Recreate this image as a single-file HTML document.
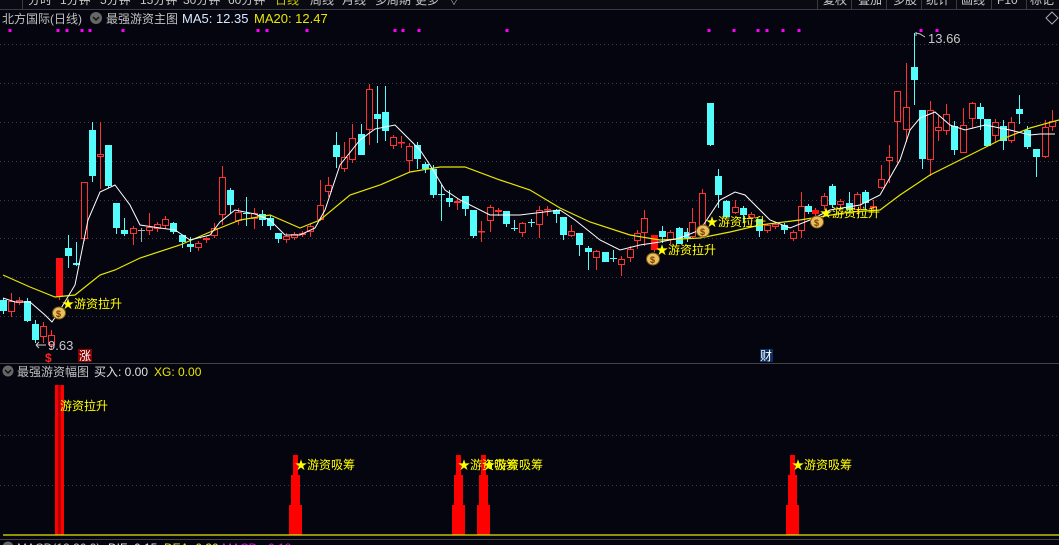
<!DOCTYPE html>
<html><head><meta charset="utf-8">
<style>
html,body{margin:0;padding:0;background:#05050f;}
body{width:1059px;height:545px;overflow:hidden;position:relative;font-family:"Liberation Sans","Noto Sans CJK SC",sans-serif;}
svg{position:absolute;left:0;top:0;}
text{font-family:"Liberation Sans","Noto Sans CJK SC",sans-serif;}
</style></head><body>
<svg id="s" width="1059" height="545" xmlns="http://www.w3.org/2000/svg">
<rect width="1059" height="545" fill="#05050f"/>
<rect x="0" y="0" width="1059" height="9" fill="#0a0a12"/>
<line x1="0" y1="9.5" x2="1059" y2="9.5" stroke="#3a3a44"/>
<line x1="22.5" y1="0" x2="22.5" y2="9" stroke="#3a3a44"/>
<g font-size="12" fill="#c8c8c8">
<text x="28" y="4">分时</text><text x="60" y="4">1分钟</text><text x="100" y="4">5分钟</text><text x="140" y="4">15分钟</text><text x="183" y="4">30分钟</text><text x="228" y="4">60分钟</text>
<text x="275" y="4" fill="#c8c800">日线</text><text x="310" y="4">周线</text><text x="342" y="4">月线</text><text x="375" y="4">多周期</text><text x="415" y="4">更多</text><text x="448" y="4">▽</text>
</g>
<g font-size="12" fill="#c8c8c8">
<text x="823" y="4">复权</text><text x="858" y="4">叠加</text><text x="893" y="4">多股</text><text x="926" y="4">统计</text><text x="961" y="4">画线</text><text x="997" y="4">F10</text><text x="1030" y="4">标记</text>
</g>
<g stroke="#3a3a44"><line x1="817.5" y1="0" x2="817.5" y2="9"/><line x1="851.5" y1="0" x2="851.5" y2="9"/><line x1="886.5" y1="0" x2="886.5" y2="9"/><line x1="921.5" y1="0" x2="921.5" y2="9"/><line x1="956.5" y1="0" x2="956.5" y2="9"/><line x1="991.5" y1="0" x2="991.5" y2="9"/><line x1="1026.5" y1="0" x2="1026.5" y2="9"/></g>
<text x="2" y="23" font-size="12" fill="#c0c0c0">北方国际(日线)</text>
<circle cx="96" cy="18" r="6" fill="#666"/><path d="M93 17 L96 20 L99 17" stroke="#111" stroke-width="1.5" fill="none"/>
<text x="106" y="23" font-size="12" fill="#c0c0c0">最强游资主图</text>
<text x="182" y="23" font-size="13" fill="#d8e8ff">MA5: 12.35</text>
<text x="254" y="23" font-size="13" fill="#e8e800">MA20: 12.47</text>
<path d="M1046 18 L1052 12 L1058 18 L1052 24 Z" stroke="#aaa" fill="none"/>
<g id="grid"></g>
<g id="dots" fill="#ff00ff"></g>
<g id="candles"></g>
<polyline id="ma20" fill="none" stroke="#e6e600" stroke-width="1.2"/>
<polyline id="ma5" fill="none" stroke="#ffffff" stroke-width="1"/>
<path d="M916 32 L916 36 M916 33 L920 34 L925 37" stroke="#ccc" fill="none"/>
<text x="928" y="43" font-size="13" fill="#c8c8c8">13.66</text>
<path d="M36 345 L46 345 M36 345 L39 342 M36 345 L39 348" stroke="#ccc" fill="none"/>
<text x="48" y="350" font-size="13" fill="#c8c8c8">9.63</text>
<text x="45" y="362" font-size="12" fill="#ff2020" font-weight="bold">$</text>
<rect x="78" y="349" width="14" height="13" fill="#8a0000"/><text x="79" y="360" font-size="12" fill="#fff">涨</text>
<rect x="760" y="349" width="13" height="13" fill="#0a3060"/><text x="760" y="360" font-size="12" fill="#fff">财</text>
<g id="bags"></g>
<line x1="0" y1="363.5" x2="1059" y2="363.5" stroke="#444"/>
<circle cx="8" cy="371" r="5.5" fill="#666"/><path d="M5 370 L8 373 L11 370" stroke="#111" stroke-width="1.5" fill="none"/>
<text x="17" y="376" font-size="12" fill="#c0c0c0">最强游资幅图</text>
<text x="94" y="376" font-size="12" fill="#e0e0e0">买入: 0.00</text>
<text x="154" y="376" font-size="12" fill="#e8e800">XG: 0.00</text>
<rect x="55" y="385" width="9" height="150" fill="#ff0000"/><rect x="58" y="385" width="3" height="150" fill="#b00000"/>
<text x="60" y="410" font-size="12" fill="#ffff00">游资拉升</text>
<g fill="#ff0000" id="bars"></g>
<line x1="3" y1="535" x2="1059" y2="535" stroke="#e6e600" stroke-width="1.2"/>
<line x1="0" y1="539.5" x2="1059" y2="539.5" stroke="#444"/>
<circle cx="8" cy="547" r="5.5" fill="#666"/>
<text x="17" y="552" font-size="12" fill="#c0c0c0">MACD(12,26,9)</text>
<text x="108" y="552" font-size="12" fill="#e0e0e0">DIF: 0.15</text>
<text x="164" y="552" font-size="12" fill="#e8e800">DEA: 0.30</text>
<text x="222" y="552" font-size="12" fill="#ff00ff">MACD: -0.18</text>
</svg>
<script>
var NS="http://www.w3.org/2000/svg";
function el(p,t,a){var e=document.createElementNS(NS,t);for(var k in a)e.setAttribute(k,a[k]);document.getElementById(p).appendChild(e);return e;}
[44,83,122,161,200,238,277,316,435,485].forEach(function(y){el("grid","line",{x1:0,y1:y+.5,x2:1059,y2:y+.5,stroke:"#3a3a48","stroke-dasharray":"1 3"});});
[10,58,67,82,90,123,258,267,307,395,403,419,507,709,734,758,767,783,799,921,937].forEach(function(x){el("dots","rect",{x:x-1.5,y:29,width:3,height:3});});
var C=[
[3,300,311,298,314,'c'],[11,301,312,293,317,'r'],[19,300,303,297,305,'r'],[27,301,321,298,322,'c'],[35,324,340,320,343,'c'],[43,326,337,322,343,'r'],[51,335,345,330,350,'r'],[59,258,297,258,300,'R'],
[68,248,256,235,268,'c'],[76,263,265,242,266,'c'],[84,182,239,182,241,'r'],[92,130,176,122,182,'c'],[100,154,157,122,189,'r'],[108,145,186,145,188,'c'],[116,203,228,203,234,'c'],[124,230,234,218,236,'c'],
[133,228,234,226,245,'r'],[141,230,231,228,242,'g'],[149,227,231,213,235,'r'],[157,224,229,222,232,'r'],[165,219,226,216,229,'r'],[173,223,232,222,234,'c'],[182,235,242,235,248,'c'],[190,244,247,237,252,'c'],
[198,243,248,241,251,'r'],[206,238,240,237,243,'r'],[214,228,236,223,238,'r'],[222,177,215,166,225,'r'],[230,190,205,188,214,'c'],[238,212,221,208,225,'r'],[246,213,214,197,226,'c'],[254,213,219,208,229,'r'],
[262,214,220,210,226,'c'],[270,218,226,215,230,'c'],[278,233,239,233,243,'c'],[286,236,240,233,243,'r'],[294,234,238,232,240,'r'],[302,233,235,231,237,'r'],[310,226,232,223,237,'r'],[320,205,220,180,221,'r'],
[328,185,192,177,197,'r'],[336,145,157,132,168,'c'],[344,157,169,142,172,'r'],[352,138,160,124,163,'r'],[361,134,155,124,155,'c'],[369,89,130,84,145,'r'],[377,114,119,86,143,'c'],[385,112,131,86,141,'c'],
[393,137,146,135,149,'r'],[401,142,143,136,148,'r'],[409,146,161,143,172,'r'],[417,145,159,142,169,'c'],[425,164,169,162,173,'c'],[433,169,195,165,198,'c'],[441,194,195,185,221,'c'],[449,198,202,190,207,'c'],
[457,201,203,198,210,'r'],[465,196,209,196,216,'c'],[473,210,236,210,238,'c'],[481,231,232,221,242,'r'],[490,207,221,205,232,'r'],[498,210,212,208,216,'r'],[506,211,224,211,227,'c'],[514,228,229,220,231,'c'],
[522,223,233,222,237,'r'],[531,222,223,219,227,'c'],[539,210,225,206,238,'r'],[547,209,210,206,216,'r'],[556,210,214,209,223,'c'],[563,217,235,217,240,'c'],[571,231,236,225,237,'r'],[579,233,245,233,256,'c'],
[588,248,252,246,270,'c'],[596,251,258,250,270,'r'],[605,252,262,252,262,'c'],[613,258,259,250,262,'c'],[621,259,265,256,276,'r'],[630,249,258,246,262,'r'],[644,218,233,210,246,'r'],[637,233,241,230,249,'r'],
[654,235,250,235,252,'R'],[662,231,237,226,243,'c'],[670,232,240,230,244,'r'],[679,228,244,227,244,'c'],[687,232,238,228,242,'c'],[692,222,237,208,238,'r'],[702,193,229,189,233,'r'],[710,103,145,103,146,'c'],
[718,176,195,169,208,'c'],[726,201,217,200,218,'c'],[735,207,213,200,214,'r'],[743,208,215,206,222,'c'],[751,214,218,212,226,'r'],[759,219,231,219,237,'c'],[767,225,231,224,233,'r'],[775,224,227,223,229,'r'],
[784,225,230,223,234,'c'],[793,232,239,230,241,'r'],[801,206,231,192,238,'r'],[808,206,212,204,214,'c'],[815,210,214,208,216,'R'],[824,196,206,193,210,'r'],[832,186,205,184,208,'c'],[840,201,205,199,210,'r'],
[849,203,210,192,212,'c'],[857,194,210,192,213,'r'],[865,192,203,190,210,'c'],[873,206,208,200,212,'r'],[881,179,188,165,189,'r'],[889,157,161,145,183,'r'],[897,91,122,91,163,'r'],[906,107,130,63,142,'r'],
[914,67,80,33,105,'c'],[922,110,159,110,169,'c'],[930,110,160,101,176,'r'],[938,127,131,116,141,'r'],[946,114,131,104,135,'r'],[954,126,150,121,155,'c'],[963,125,153,108,153,'r'],[972,103,119,102,129,'r'],
[980,107,119,103,130,'c'],[987,119,146,119,146,'c'],[995,122,136,119,142,'r'],[1003,126,141,120,150,'c'],[1011,122,141,117,143,'r'],[1019,109,114,95,124,'c'],[1027,130,147,126,149,'c'],[1036,149,157,149,177,'c'],
[1045,127,157,120,158,'r'],[1052,121,127,110,131,'r']];
C.forEach(function(c){
 var x=c[0],t=c[5],col=t=='c'?'#54fcfc':(t=='g'?'#aaa':'#ff3232');
 el("candles","line",{x1:x+.5,y1:c[3],x2:x+.5,y2:c[4],stroke:col});
 var h=Math.max(1,c[2]-c[1]);
 if(t=='r') el("candles","rect",{x:x-2.5,y:c[1]+.5,width:6,height:Math.max(0.5,h-1),fill:"#05050f",stroke:col});
 else el("candles","rect",{x:x-3,y:c[1],width:7,height:h,fill:t=='R'?'#ff1010':col});
});
document.getElementById("ma20").setAttribute("points","3,275 30,287 55,297 75,295 100,275 115,270 140,258 180,245 210,232 240,220 270,215 300,228 320,220 350,195 380,185 410,172 440,167 465,167 500,180 530,190 560,208 590,222 630,235 660,240 700,238 730,232 760,225 800,220 850,212 880,210 900,195 930,175 960,160 1000,140 1030,128 1059,120");
document.getElementById("ma5").setAttribute("points","3,298 15,302 30,302 45,315 52,322 60,310 75,285 88,220 100,192 115,185 130,205 140,225 160,228 175,230 190,240 210,235 220,222 235,210 255,214 270,220 285,235 300,235 315,228 325,210 340,165 360,140 375,129 395,125 405,135 420,150 430,165 445,190 460,200 490,215 520,215 560,210 575,220 600,240 620,250 640,245 660,242 680,238 700,230 720,200 735,192 745,195 755,205 770,220 790,228 810,220 830,210 860,205 880,195 900,160 910,130 920,118 935,112 950,125 965,130 985,125 1010,130 1030,135 1040,134 1055,134");
[[59,313],[653,259],[703,231],[817,222]].forEach(function(b){
 el("bags","ellipse",{cx:b[0],cy:b[1],rx:6.5,ry:6,fill:"#e8c060",stroke:"#7a5a10"});
 var t=el("bags","text",{x:b[0]-3,y:b[1]+4,"font-size":"9",fill:"#7a3a00","font-weight":"bold"});t.textContent="$";
 var s=el("bags","text",{x:b[0]+3,y:b[1]-5,"font-size":"12",fill:"#ffff00"});s.textContent="★游资拉升";
});
function bar(x){el("bars","rect",{x:x+4,y:455,width:5,height:80});el("bars","rect",{x:x+2,y:475,width:9,height:60});el("bars","rect",{x:x,y:505,width:13,height:30});}
bar(289);bar(452);bar(477);bar(786);
[[295,469],[458,469],[483,469],[792,469]].forEach(function(p){var t=el("bars","text",{x:p[0],y:p[1],"font-size":"12",fill:"#ffff00"});t.textContent="★游资吸筹";});
</script>
</body></html>
